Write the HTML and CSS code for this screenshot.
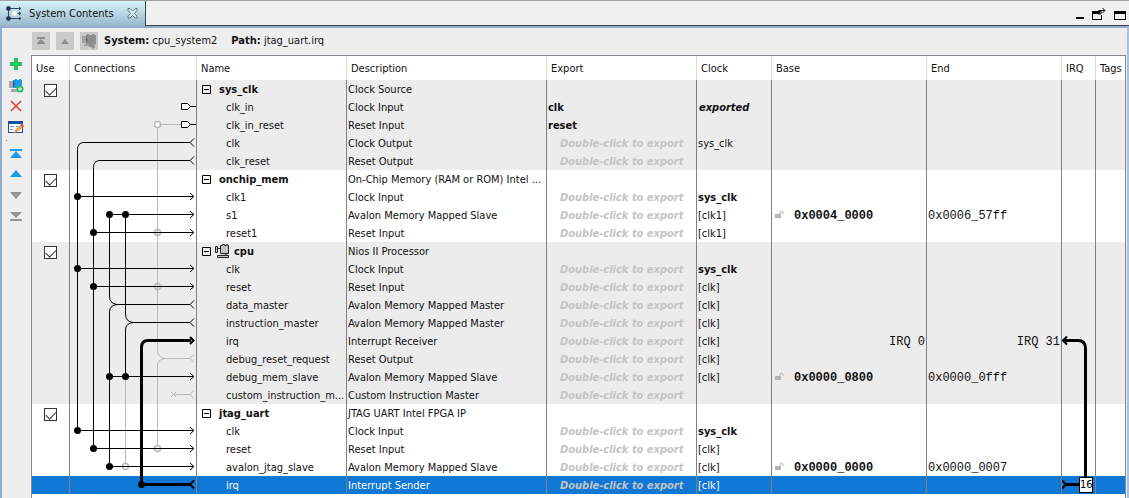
FILE: index.html
```html
<!DOCTYPE html>
<html lang="en">
<head>
<meta charset="utf-8">
<title>System Contents</title>
<link rel="stylesheet" href="styles.css">
</head>
<body>
<div class="window">
  <header class="tabbar">
    <div class="tab">
      <svg width="17" height="15" viewBox="0 0 17 15" fill="none" stroke="#2f4660">
        <path d="M2.500 2v10M2 2.500h13M2 12.500h13M9 7.500h6"/>
        <path d="M13 1l2 1.500-2 1.500M13 6l2 1.500-2 1.500M13 11l2 1.500-2 1.500"/>
        <circle cx="2.500" cy="2.500" r="2" fill="#1d3550"/><circle cx="2.500" cy="12.500" r="2" fill="#1d3550"/>
        <circle cx="8.500" cy="7.500" r="2.500" fill="#fff" stroke="#dbeef5"/>
      </svg>
      <span>System Contents</span>
      <button class="plain close" aria-label="Close tab"><svg width="11" height="11" viewBox="0 0 11 11" fill="#d4e8ef" stroke="#62767e"><path d="M1 .5h2l2.500 2.500L8 .5h2v2L7.500 5.500 10 8v2H8L5.500 7.500 3 10H1V8l2.500-2.500L1 2.500z"/></svg></button>
    </div>
    <div class="tabrest">
      <button class="plain" aria-label="Minimize"><svg width="14" height="13" viewBox="0 0 14 13"><path d="M4 9h8v2H4z"/></svg></button>
      <button class="plain" aria-label="Detach"><svg width="15" height="13" viewBox="0 0 15 13"><path d="M0 3h7v3H1v5h8V7h1v5H0z"/><path d="M6 3h3v3H6zM7.500 5.500V2.500h5M10.500 0l2.500 2.500-2.500 2.500" fill="none" stroke="#000"/></svg></button>
      <button class="plain" aria-label="Maximize"><svg width="13" height="13" viewBox="0 0 13 13"><path d="M1 3h12v9H1zM2 6v5h10V6z" fill-rule="evenodd"/></svg></button>
    </div>
  </header>
  <main class="view">
    <div class="pathbar">
      <button class="square" aria-label="Go to top"><svg width="18" height="18" viewBox="0 0 18 18" fill="#8d8d8d"><path d="M5 5h8v2H5zM9 7l4 4H5zM5 11h8v1H5z"/></svg></button>
      <button class="square" aria-label="Go up"><svg width="18" height="18" viewBox="0 0 18 18" fill="#8d8d8d"><path d="M9 7l4 5H5z"/></svg></button>
      <button class="square" aria-label="Drill into subsystem"><svg width="18" height="18" viewBox="0 0 18 18" fill="#8d8d8d"><path d="M6 3h1V2h2v1h3V2h2v1h2v9l-2 1 1 2-2 2-2-2-3-1-2-2z"/><path d="M2 4h4v7H2zM4 12h5v2H4z" fill="#a2a2a2"/><path d="M6 4l2 4-2 3z" fill="#6e6e6e"/></svg></button>
      <p class="path"><b>System:</b> cpu_system2</p>
      <p class="path"><b>Path:</b> jtag_uart.irq</p>
    </div>
    <div class="work">
      <nav class="tools" aria-label="Tools">
        <button class="plain" aria-label="Add"><svg width="16" height="16" viewBox="0 0 16 16" fill="#2fc162"><path d="M6 2h4v4h4v4h-4v4H6v-4H2V6h4z"/></svg></button>
        <button class="plain" aria-label="Add subsystem"><svg width="16" height="16" viewBox="0 0 16 16"><path d="M1 4h4v7H1zM3 12h7v3H3z" fill="#a8a8a8"/><path d="M5 3h2V2h2v1h2V2h2v1h1v8H5z" fill="#1c9bea"/><path d="M5 3l2 4-2 4z" fill="#245e8f"/><circle cx="12" cy="12" r="3.500" fill="#27b85c"/><path d="M12 10v4M10 12h4" stroke="#fff"/></svg></button>
        <button class="plain" aria-label="Remove"><svg width="16" height="16" viewBox="0 0 16 16" stroke="#e8372c" stroke-width="1.500"><path d="M3 3l10 10M13 3L3 13"/></svg></button>
        <button class="plain" aria-label="Edit"><svg width="16" height="16" viewBox="0 0 16 16"><path d="M0 2h15v12H0z" fill="#1b4f9e"/><path d="M1 5h13v8H1z" fill="#fff"/><path d="M2 7.500h4M2 10.500h3M8 7.500h5" stroke="#58aef0"/><path d="M6 14l1-3 6-5 2 2-6 5z" fill="#f5a02c"/><path d="M12 6l2-1 2 2-1 1.500z" fill="#e8402c"/></svg></button>
        <span class="dot"></span>
        <button class="plain" aria-label="Move to top"><svg width="16" height="16" viewBox="0 0 16 16" fill="#1c9bea"><path d="M2 3h12v2H2zM8 5l6 7H2z"/></svg></button>
        <button class="plain" aria-label="Move up"><svg width="16" height="16" viewBox="0 0 16 16" fill="#1c9bea"><path d="M8 3l6 7H2z"/></svg></button>
        <button class="plain" aria-label="Move down"><svg width="16" height="16" viewBox="0 0 16 16" fill="#949494"><path d="M8 11l6-7H2z"/></svg></button>
        <button class="plain" aria-label="Move to bottom"><svg width="16" height="16" viewBox="0 0 16 16" fill="#949494"><path d="M2 3h12l-6 6zM2 10h12v2H2z"/></svg></button>
      </nav>
      <div class="sheet">
        <table class="grid">
          <colgroup><col class="c-use"><col class="c-conn"><col class="c-name"><col class="c-desc"><col class="c-exp"><col class="c-clock"><col class="c-base"><col class="c-end"><col class="c-irq"><col></colgroup>
          <thead><tr><th>Use</th><th>Connections</th><th>Name</th><th>Description</th><th>Export</th><th>Clock</th><th>Base</th><th>End</th><th>IRQ</th><th>Tags</th></tr></thead>
          <tbody id="rows"></tbody>
        </table>
      </div>
    </div>
  </main>
</div>

<template id="wires">
  <svg class="wires" width="126" height="414" viewBox="70 80 126 414" fill="none" stroke="#000">
    <g stroke="#b8b8b8">
      <path d="M161 124.500H181M157.500 128V350q0 8 8 8.500H190M157.500 445V366q0-7 8-7.500M125.500 377V463"/>
      <path d="M173 394.500H190M171 392l5 5M176 392l-5 5M194 354.500l-4 4 4 4M194 390.500l-4 4 4 4"/>
      <g stroke-width="1.500"><circle cx="157.500" cy="124.500" r="3" fill="#fff"/><circle cx="157.500" cy="232.500" r="3"/><circle cx="157.500" cy="286.500" r="3"/><circle cx="157.500" cy="448.500" r="3"/><circle cx="125.500" cy="466.500" r="3" fill="#fff"/></g>
    </g>
    <path d="M181.500 103.500h6l3 3-3 3h-6zM190 106.500h6M181.500 121.500h6l3 3-3 3h-6zM190 124.500h6" fill="#fff"/>
    <path d="M190 142.500H84q-6.500 0-6.500 7V431M190 160.500H100q-6.500 0-6.500 7V449M109.500 214V296q0 8 8 8.500H190M109.500 467V312q0-7 8-7.500M125.500 214V314q0 8 8 8.500H190M125.500 377V330q0-7 8-7.500"/>
    <path d="M78 196.500H193M109.500 214.500H193M94 232.500H193M78 268.500H193M94 286.500H193M109.500 376.500H193M78 430.500H193M94 448.500H193M109.500 466.500H193"/>
    <path d="M190 193l4 3.500-4 3.500M190 211l4 3.500-4 3.500M190 229l4 3.500-4 3.500M190 265l4 3.500-4 3.500M190 283l4 3.500-4 3.500M190 373l4 3.500-4 3.500M190 427l4 3.500-4 3.500M190 445l4 3.500-4 3.500M190 463l4 3.500-4 3.500M194 138.500l-4 4 4 4M194 156.500l-4 4 4 4M194 300.500l-4 4 4 4M194 318.500l-4 4 4 4"/>
    <path d="M191 340.500H148q-6.500 0-6.500 7V484.500H191" stroke-width="3"/>
    <path d="M190 337l3.500 3.500-3.500 3.500M194 480.500l-4 4 4 4" stroke-width="2"/>
    <g fill="#000" stroke="none"><circle cx="77.500" cy="196.500" r="3.500"/><circle cx="77.500" cy="268.500" r="3.500"/><circle cx="77.500" cy="430.500" r="3.500"/><circle cx="93.500" cy="232.500" r="3.500"/><circle cx="93.500" cy="286.500" r="3.500"/><circle cx="93.500" cy="448.500" r="3.500"/><circle cx="109.500" cy="214.500" r="3.500"/><circle cx="125.500" cy="214.500" r="3.500"/><circle cx="109.500" cy="376.500" r="3.500"/><circle cx="125.500" cy="376.500" r="3.500"/><circle cx="109.500" cy="466.500" r="3.500"/><circle cx="141.500" cy="484.500" r="3.500"/></g>
  </svg>
</template>
<template id="irqwire">
  <svg class="irqwire" width="34" height="162" viewBox="1062 332 34 162" fill="none" stroke="#000" stroke-width="3">
    <path d="M1064 340.500H1078q7.500 0 7.500 8V478M1065 484.500h14"/>
    <path d="M1067 336.500l-4 4 4 4M1062 480.500l4 4-4 4" stroke-width="2"/>
  </svg>
</template>
<script src="rows.js"></script>
</body>
</html>
```
FILE: rows.js
```js
const HINT = "Double-click to export";
// [name, description, export, clock, base, end]
const groups = [
  { name: "sys_clk", desc: "Clock Source", rows: [
    ["clk_in", "Clock Input", "clk", "exported"],
    ["clk_in_reset", "Reset Input", "reset"],
    ["clk", "Clock Output", HINT, "sys_clk"],
    ["clk_reset", "Reset Output", HINT]] },
  { name: "onchip_mem", desc: "On-Chip Memory (RAM or ROM) Intel ...", rows: [
    ["clk1", "Clock Input", HINT, "*sys_clk"],
    ["s1", "Avalon Memory Mapped Slave", HINT, "[clk1]", "0x0004_0000", "0x0006_57ff"],
    ["reset1", "Reset Input", HINT, "[clk1]"]] },
  { name: "cpu", desc: "Nios II Processor", rows: [
    ["clk", "Clock Input", HINT, "*sys_clk"],
    ["reset", "Reset Input", HINT, "[clk]"],
    ["data_master", "Avalon Memory Mapped Master", HINT, "[clk]"],
    ["instruction_master", "Avalon Memory Mapped Master", HINT, "[clk]"],
    ["irq", "Interrupt Receiver", HINT, "[clk]", "IRQ 0", "IRQ 31"],
    ["debug_reset_request", "Reset Output", HINT, "[clk]"],
    ["debug_mem_slave", "Avalon Memory Mapped Slave", HINT, "[clk]", "0x0000_0800", "0x0000_0fff"],
    ["custom_instruction_m...", "Custom Instruction Master", HINT]] },
  { name: "jtag_uart", desc: "JTAG UART Intel FPGA IP", rows: [
    ["clk", "Clock Input", HINT, "*sys_clk"],
    ["reset", "Reset Input", HINT, "[clk]"],
    ["avalon_jtag_slave", "Avalon Memory Mapped Slave", HINT, "[clk]", "0x0000_0000", "0x0000_0007"],
    ["irq", "Interrupt Sender", HINT, "[clk]"]] },
];
const expander = '<button class="plain expander" aria-label="Collapse"><svg width="9" height="9" viewBox="0 0 9 9" fill="none" stroke="#000"><path d="M.5 .5h8v8h-8zM2 4.500h5"/></svg></button>';
const chip = '<svg class="chip" width="15" height="14" viewBox="0 0 15 14" fill="#c4c4c4" stroke="#222"><path d="M.5 2.500h2v6h-2zM5.500 1.500h2v-1h2v1h2v-1h1v1h1v8h-8zM3 4.500h2M6 11.500h5v-2M2.500 11.500h11v2h-11z"/></svg>';
const lock = '<svg class="lock" width="9" height="9" viewBox="0 0 9 9"><path d="M0 4h6v4H0z" fill="#b4b4b4"/><path d="M5 4V2q1.500-2 3 0v2" fill="none" stroke="#b4b4b4"/></svg>';
const wires = document.getElementById("wires").innerHTML;
const irqwire = document.getElementById("irqwire").innerHTML;

const clock = c => !c ? "" : c === "exported" ? '<b class="exported">exported</b>' : c[0] === "*" ? `<b>${c.slice(1)}</b>` : c;
const addr = (v, base) => !v ? "" : v.startsWith("IRQ") ? `<span class="right">${v}</span>` : base ? `${lock}<b>${v}</b>` : v;

document.getElementById("rows").innerHTML = groups.map((g, i) => {
  const tone = i % 2 ? "" : "shade";
  const head = `<tr class="${tone}"><td class="use"><input type="checkbox" checked aria-label="Use ${g.name}"></td>
    <td>${i ? "" : wires}</td><td class="module">${expander}${g.name === "cpu" ? chip : ""}<b>${g.name}</b></td>
    <td>${g.desc}</td><td></td><td></td><td></td><td></td><td></td><td></td></tr>`;
  return head + g.rows.map(([n, d, e, c, b, end]) => {
    const sender = d === "Interrupt Sender";
    const irq = d === "Interrupt Receiver" ? irqwire : sender ? '<span class="irqno">16</span>' : "";
    return `<tr class="${sender ? "selected" : i === 3 ? "" : tone}"><td></td><td></td><td class="port">${n}</td><td>${d}</td>
      <td>${e === HINT ? `<i class="hint">${e}</i>` : `<b>${e}</b>`}</td><td>${clock(c)}</td>
      <td class="mono">${addr(b, true)}</td><td class="mono">${addr(end)}</td><td>${irq}</td><td></td></tr>`;
  }).join("");
}).join("");
```
FILE: styles.css
```css
* { box-sizing: border-box; }
body { margin: 0; background: #eee; color: #111; font: 11px/16px "DejaVu Sans Condensed", "Noto Sans", sans-serif; }
svg { display: block; }
.plain { padding: 0; border: 0; background: none; display: block; }
.window { min-height: 100vh; display: flex; flex-direction: column; }

.tabbar { display: flex; height: 26px; border-top: 1px solid #a0a0a0; }
.tab { display: flex; align-items: center; gap: 6px; width: 146px; padding: 0 7px 0 6px; border-right: 1px solid #444; background: linear-gradient(#d8f4fa, #96b7cd); white-space: nowrap; }
.close { margin-left: auto; }
.tabrest { flex: 1; display: flex; justify-content: flex-end; align-items: center; gap: 6px; padding: 2px 3px 0 0; border-bottom: 1px solid #444; background: #f0f0f0; }

.view { flex: 1; display: flex; flex-direction: column; padding-right: 1px; border: 2px solid #92abcd; border-right-color: #a9c1de; border-bottom: 0; }
.pathbar { display: flex; align-items: center; gap: 6px; height: 27px; padding: 0 0 2px 30px; }
.square { width: 18px; height: 18px; padding: 0; border: 0; background: #cacaca; }
.path { margin: 0 8px 0 0; }

.work { flex: 1; display: flex; }
.tools { width: 29px; display: flex; flex-direction: column; gap: 5px; padding: 1px 0 0 6px; }
.dot { width: 1px; height: 1px; margin-left: -2px; background: #777; }
.sheet { flex: 1; border: 1px solid #828790; border-bottom: 0; background: #fff; }

.grid { width: 100%; table-layout: fixed; border-collapse: separate; border-spacing: 0; }
.c-use { width: 38px; }
.c-conn { width: 127px; }
.c-name, .c-exp { width: 150px; }
.c-desc { width: 200px; }
.c-clock { width: 75px; }
.c-base { width: 155px; }
.c-end { width: 135px; }
.c-irq { width: 34px; }
th { height: 24px; padding: 2px 4px 0; border-right: 1px solid #dcdcdc; font-weight: 400; text-align: left; white-space: nowrap; }
td { position: relative; height: 18px; padding: 2px 1px 0; border-right: 1px solid #808080; white-space: nowrap; }
th:last-child, td:last-child { border-right: 0; }
.shade { background: #ececec; }
.selected { background: #0f77d4; color: #fff; }
.use input { appearance: none; display: block; width: 13px; height: 13px; margin: 0 auto; border: 1px solid #333; background: #fff; }
.use input:checked::before { content: ""; display: block; width: 9px; height: 5px; margin: 2px 0 0 1px; border: solid #333; border-width: 0 0 1px 1px; transform: rotate(-45deg); }
.module { padding-left: 5px; }
.module b { margin-left: 8px; }
.module .chip { display: inline-block; margin-left: 4px; vertical-align: -3px; }
.module .chip + b { margin-left: 4px; }
.expander { display: inline-block; vertical-align: -1px; }
.port { padding-left: 29px; }
.hint { padding-left: 12px; color: #c4c4c4; font-weight: 700; }
.exported { font-style: italic; padding-left: 1px; }
.mono { font: 12px/16px "Liberation Mono", monospace; }
.lock { display: inline-block; margin: 0 10px 0 2px; }
.right { display: block; text-align: right; }
.wires, .irqwire { position: absolute; left: 0; top: 0; z-index: 1; }
.irqno { position: absolute; z-index: 2; right: 2px; top: 1px; width: 14px; border: 1px solid #000; background: #fff; color: #000; line-height: 14px; text-align: center; }
```
